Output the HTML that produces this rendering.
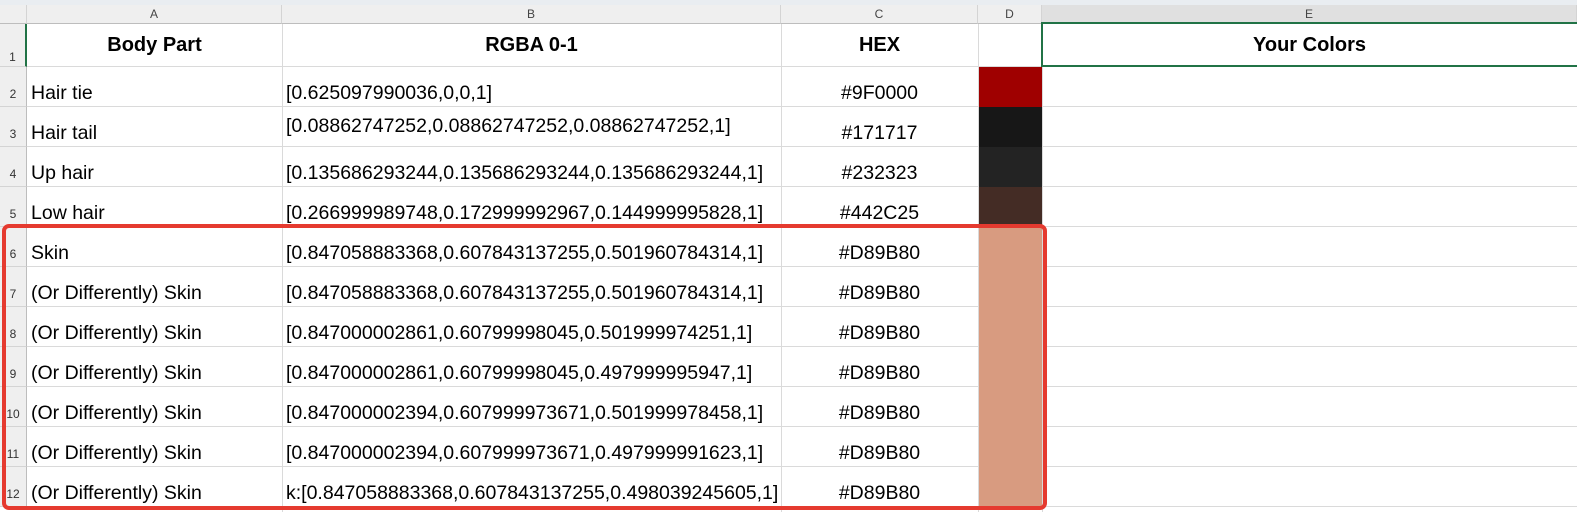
<!DOCTYPE html>
<html><head><style>
body{margin:0;width:1577px;height:512px;overflow:hidden;background:#fff;font-family:"Liberation Sans",sans-serif;position:relative}
.a{position:absolute}
.top{left:0;top:0;width:1577px;height:5px;background:#e9edf1}
.ch{top:5px;height:19px;background:#efefef;border-bottom:1px solid #bdbdbd;box-sizing:border-box;font-size:12px;color:#444;text-align:center;line-height:19px;border-right:1px solid #d4d4d4}
.rh{left:0;width:27px;background:#efefef;border-right:1px solid #bdbdbd;border-bottom:1px solid #d4d4d4;box-sizing:border-box;font-size:12px;color:#333;text-align:center}
.hl{height:1px;background:#dadada;left:27px;width:1550px}
.vl{width:1px;background:#dadada;top:24px;height:488px}
.t{font-size:19.5px;color:#000;white-space:nowrap}
.h{font-size:20px;font-weight:bold}
.sw{left:979px;width:63px;height:40px}
</style></head><body>
<div class="a top"></div>
<div class="a ch" style="left:0;width:27px"></div>
<div class="a ch" style="left:27px;width:255px">A</div>
<div class="a ch" style="left:282px;width:499px">B</div>
<div class="a ch" style="left:781px;width:197px">C</div>
<div class="a ch" style="left:978px;width:64px">D</div>
<div class="a ch" style="left:1042px;width:535px;background:#e0e0e0;border-bottom:2px solid #217346">E</div>
<div class="a vl" style="left:282px"></div>
<div class="a vl" style="left:781px"></div>
<div class="a vl" style="left:978px"></div>
<div class="a vl" style="left:1042px"></div>
<div class="a hl" style="top:66px"></div>
<div class="a hl" style="top:106px"></div>
<div class="a hl" style="top:146px"></div>
<div class="a hl" style="top:186px"></div>
<div class="a hl" style="top:226px"></div>
<div class="a hl" style="top:266px"></div>
<div class="a hl" style="top:306px"></div>
<div class="a hl" style="top:346px"></div>
<div class="a hl" style="top:386px"></div>
<div class="a hl" style="top:426px"></div>
<div class="a hl" style="top:466px"></div>
<div class="a hl" style="top:506px"></div>
<div class="a rh" style="top:24px;height:43px;line-height:66px;border-right:2px solid #217346">1</div>
<div class="a rh" style="top:67px;height:40px;line-height:54px">2</div>
<div class="a rh" style="top:107px;height:40px;line-height:54px">3</div>
<div class="a rh" style="top:147px;height:40px;line-height:54px">4</div>
<div class="a rh" style="top:187px;height:40px;line-height:54px">5</div>
<div class="a rh" style="top:227px;height:40px;line-height:54px">6</div>
<div class="a rh" style="top:267px;height:40px;line-height:54px">7</div>
<div class="a rh" style="top:307px;height:40px;line-height:54px">8</div>
<div class="a rh" style="top:347px;height:40px;line-height:54px">9</div>
<div class="a rh" style="top:387px;height:40px;line-height:54px">10</div>
<div class="a rh" style="top:427px;height:40px;line-height:54px">11</div>
<div class="a rh" style="top:467px;height:40px;line-height:54px">12</div>
<div class="a sw" style="top:67px;background:#9f0000"></div>
<div class="a sw" style="top:107px;background:#171717"></div>
<div class="a sw" style="top:147px;background:#232323"></div>
<div class="a sw" style="top:187px;background:#442c25"></div>
<div class="a sw" style="top:227px;height:280px;background:#d89b80"></div>
<div class="a" style="left:1041px;top:22px;width:540px;height:45px;border:2px solid #217346;box-sizing:border-box"></div>
<div class="a t h" style="left:27px;width:255px;top:34px;text-align:center">Body Part</div>
<div class="a t h" style="left:282px;width:499px;top:34px;text-align:center">RGBA 0-1</div>
<div class="a t h" style="left:781px;width:197px;top:34px;text-align:center">HEX</div>
<div class="a t h" style="left:1042px;width:535px;top:34px;text-align:center">Your Colors</div>
<div class="a t" style="left:31px;top:82px">Hair tie</div>
<div class="a t" style="left:31px;top:122px">Hair tail</div>
<div class="a t" style="left:31px;top:162px">Up hair</div>
<div class="a t" style="left:31px;top:202px">Low hair</div>
<div class="a t" style="left:31px;top:242px">Skin</div>
<div class="a t" style="left:31px;top:282px">(Or Differently) Skin</div>
<div class="a t" style="left:31px;top:322px">(Or Differently) Skin</div>
<div class="a t" style="left:31px;top:362px">(Or Differently) Skin</div>
<div class="a t" style="left:31px;top:402px">(Or Differently) Skin</div>
<div class="a t" style="left:31px;top:442px">(Or Differently) Skin</div>
<div class="a t" style="left:31px;top:482px">(Or Differently) Skin</div>
<div class="a t" style="left:286px;top:82px">[0.625097990036,0,0,1]</div>
<div class="a t" style="left:286px;top:115px">[0.08862747252,0.08862747252,0.08862747252,1]</div>
<div class="a t" style="left:286px;top:162px">[0.135686293244,0.135686293244,0.135686293244,1]</div>
<div class="a t" style="left:286px;top:202px">[0.266999989748,0.172999992967,0.144999995828,1]</div>
<div class="a t" style="left:286px;top:242px">[0.847058883368,0.607843137255,0.501960784314,1]</div>
<div class="a t" style="left:286px;top:282px">[0.847058883368,0.607843137255,0.501960784314,1]</div>
<div class="a t" style="left:286px;top:322px">[0.847000002861,0.60799998045,0.501999974251,1]</div>
<div class="a t" style="left:286px;top:362px">[0.847000002861,0.60799998045,0.497999995947,1]</div>
<div class="a t" style="left:286px;top:402px">[0.847000002394,0.607999973671,0.501999978458,1]</div>
<div class="a t" style="left:286px;top:442px">[0.847000002394,0.607999973671,0.497999991623,1]</div>
<div class="a t" style="left:286px;top:482px">k:[0.847058883368,0.607843137255,0.498039245605,1]</div>
<div class="a t" style="left:781px;width:197px;text-align:center;top:82px">#9F0000</div>
<div class="a t" style="left:781px;width:197px;text-align:center;top:122px">#171717</div>
<div class="a t" style="left:781px;width:197px;text-align:center;top:162px">#232323</div>
<div class="a t" style="left:781px;width:197px;text-align:center;top:202px">#442C25</div>
<div class="a t" style="left:781px;width:197px;text-align:center;top:242px">#D89B80</div>
<div class="a t" style="left:781px;width:197px;text-align:center;top:282px">#D89B80</div>
<div class="a t" style="left:781px;width:197px;text-align:center;top:322px">#D89B80</div>
<div class="a t" style="left:781px;width:197px;text-align:center;top:362px">#D89B80</div>
<div class="a t" style="left:781px;width:197px;text-align:center;top:402px">#D89B80</div>
<div class="a t" style="left:781px;width:197px;text-align:center;top:442px">#D89B80</div>
<div class="a t" style="left:781px;width:197px;text-align:center;top:482px">#D89B80</div>
<div class="a" style="left:2px;top:224px;width:1045px;height:286px;border:4px solid #e53a2f;border-radius:7px;box-sizing:border-box"></div>
</body></html>
